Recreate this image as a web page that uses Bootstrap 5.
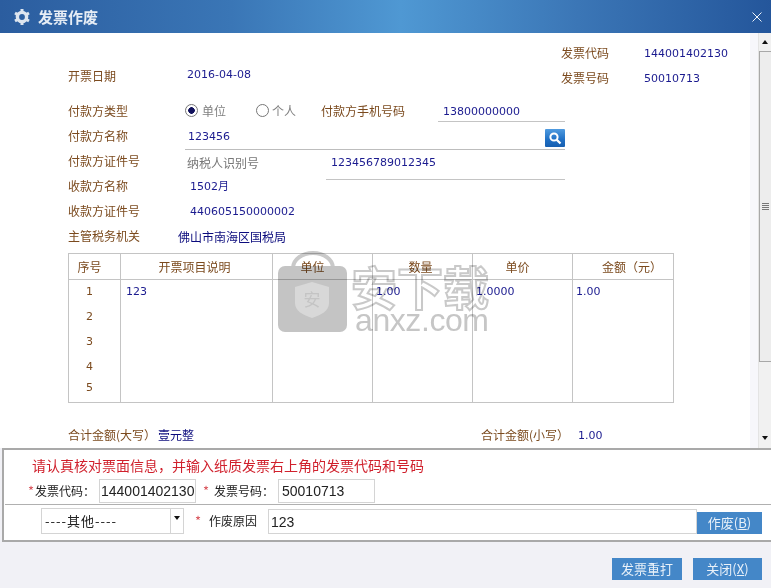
<!DOCTYPE html>
<html lang="zh-CN">

<head>
    <meta charset="UTF-8">
    <meta name="viewport" content="width=device-width, initial-scale=1.0">
    <title>发票作废</title>
    <link href="https://cdn.jsdelivr.net/npm/bootstrap@5.3.2/dist/css/bootstrap.min.css" rel="stylesheet">
    <style>
        html, body {
            height: 100%;
            overflow: hidden;
        }

        body {
            background-color: #f1f1f6;
            font-family: "Noto Sans CJK SC", "Liberation Sans", sans-serif;
            font-size: 12px;
            line-height: 16px;
        }

        .dlg {
            width: 771px;
            height: 588px;
        }

        .title-bar {
            height: 33px;
            padding: 0 8px 0 14px;
            background: linear-gradient(90deg, #2b5d9f 0%, #3a76b6 30%, #4f98d3 52%, #3b76b6 75%, #24569b 100%);
            color: #e6edf5;
            font-size: 15px;
            font-weight: 700;
        }

        .dlg-main {
            height: 415px;
            background: #fff;
        }

        .form-area {
            width: 758px;
            padding-left: 68px;
            background: linear-gradient(90deg, #fff 99%, #f7f7fb 99%);
        }

        .lbl {
            color: #7b4a1e;
        }

        .val {
            color: #1b1b8f;
            font-family: "DejaVu Sans", "Noto Sans CJK SC", sans-serif;
            font-size: 11px;
        }

        .val-dark {
            color: #0b0b7d;
            font-family: "Noto Sans CJK SC", sans-serif;
            font-size: 12px;
        }

        .val-low {
            padding-top: 2px;
        }

        .top-block {
            padding-top: 7px;
            height: 65px;
        }

        .top-left {
            padding-top: 28px;
        }

        .date-val {
            margin: -1px 0 0 2px;
        }

        .top-right {
            width: 197px;
        }

        .fld-row {
            height: 25px;
        }

        .w-lbl {
            width: 117px;
            flex: none;
        }

        .w-lbl-r {
            width: 83px;
            flex: none;
        }

        .radio-txt {
            color: #808080;
        }

        .radio-a {
            width: 54px;
        }

        .radio-b {
            width: 52px;
            padding-left: 3px;
        }

        .phone-lbl {
            width: 84px;
        }

        .form-check-input.radio-mini {
            width: 13px;
            height: 13px;
            margin: 0;
            border-color: #777;
            flex: none;
        }

        .form-check-input.radio-mini:checked {
            background-color: #fff;
            background-image: radial-gradient(circle, #12125c 3px, transparent 3.6px);
            border-color: #777;
        }

        .phone-fld {
            width: 127px;
            height: 24px;
            margin-left: 33px;
            padding: 6px 0 0 5px;
            border-bottom: 1px solid #c4c4c4;
        }

        .name-fld {
            width: 380px;
            height: 27px;
            padding-left: 3px;
            border-bottom: 1px solid #bdbdbd;
        }

        .name-val {
            margin-top: 6px;
        }

        .search-btn {
            width: 20px;
            height: 18px;
            margin-top: 6px;
            background: linear-gradient(180deg, #4f9be0 0%, #1f6fc4 60%, #175fb0 100%);
            border-radius: 1px;
        }

        .id-type {
            width: 141px;
            flex: none;
            padding: 7px 0 0 2px;
            color: #777;
        }

        .id-fld {
            width: 239px;
            height: 32px;
            flex: none;
            padding: 7px 0 0 5px;
            border-bottom: 1px solid #c4c4c4;
        }

        .val-shift {
            padding: 3px 0 0 5px;
        }

        .office-val {
            margin: 2px 0 0 -7px;
        }

        .inv-tbl {
            width: 605px;
            margin: 5px 0 0;
            table-layout: fixed;
            border-collapse: collapse;
            border: 1px solid #c4c4c4;
        }

        .inv-tbl th, .inv-tbl td {
            padding: 0;
            border: 0;
            border-left: 1px solid #c4c4c4;
            background: transparent;
            box-shadow: none;
            font-weight: 400;
            vertical-align: middle;
        }

        .inv-tbl thead th {
            height: 26px;
            text-align: center;
            color: #7b4a1e;
            border-bottom: 1px solid #c4c4c4;
        }

        .inv-tbl tbody td {
            height: 25px;
        }

        .inv-tbl td.num-cell {
            text-align: center;
            padding-right: 10px;
            color: #7b4a1e;
            font-family: "DejaVu Sans", sans-serif;
            font-size: 11px;
        }

        .inv-tbl td.txt-cell {
            padding-left: 3px;
            color: #1b1b8f;
            font-family: "DejaVu Sans", sans-serif;
            font-size: 11px;
        }

        .inv-tbl td.txt-first {
            padding-left: 5px;
        }

        .inv-tbl tr.last-row td {
            height: 23px;
            vertical-align: top;
        }

        .col-a { width: 52px; }
        .col-b { width: 152px; }
        .col-c { width: 100px; }
        .col-d { width: 101px; }

        .inv-tbl th.pr-10 { padding-right: 10px; }
        .inv-tbl th.pr-4 { padding-right: 4px; }
        .inv-tbl th.pr-20 { padding-right: 20px; }
        .inv-tbl th.pl-18 { padding-left: 18px; }

        .sum-row {
            height: 22px;
            margin-top: 21px;
        }

        .sum-big {
            width: 90px;
            flex: none;
        }

        .sum-mid {
            width: 323px;
            flex: none;
        }

        .sum-small {
            width: 97px;
            flex: none;
        }

        .watermark {
            position: absolute;
            left: 277px;
            top: 217px;
            mix-blend-mode: multiply;
            pointer-events: none;
        }

        .wm-cn {
            font-family: "Noto Sans CJK SC", sans-serif;
            font-size: 46px;
            font-weight: 700;
            fill: #fff;
            stroke: #c9c9c9;
            stroke-width: 2px;
        }

        .wm-en {
            font-family: "Liberation Sans", sans-serif;
            font-size: 32px;
            fill: #c6c6c6;
        }

        .wm-badge {
            font-family: "Noto Sans CJK SC", sans-serif;
            font-size: 17px;
            fill: #c4c4c4;
        }

        .scroll-col {
            width: 13px;
            background: #f1f1f1;
            border-left: 1px solid #e4e4e4;
        }

        .scroll-arrow {
            height: 18px;
        }

        .scroll-thumb {
            height: 311px;
            background: #ededed;
            border: 1px solid #a8a8a8;
            border-right: 0;
        }

        .grip {
            width: 7px;
            height: 7px;
            background: repeating-linear-gradient(180deg, #777 0 1px, transparent 1px 2px);
        }

        .tri-up {
            transform: rotate(180deg);
        }

        .check-panel {
            height: 94px;
            margin-left: 2px;
            background: #fff;
            border: 2px solid #a9a9a9;
            border-right: 0;
        }

        .check-top {
            height: 55px;
            border-bottom: 1px solid #b0b0b0;
            margin-left: 1px;
        }

        .warn-msg {
            height: 30px;
            padding: 7px 0 0 27px;
            color: #d0202c;
            font-size: 14px;
            line-height: 16px;
        }

        .req {
            color: #d9535a;
            font-size: 13px;
            flex: none;
        }

        .req-a {
            width: 7px;
        }

        .req-b {
            width: 11px;
            margin-left: 7px;
        }

        .code-lbl {
            color: #222;
            font-size: 12px;
            white-space: nowrap;
            flex: none;
        }

        .code-w {
            width: 64px;
        }

        .code-row {
            margin-top: -1px;
            padding-left: 23px;
        }

        .code-box {
            width: 97px;
            height: 24px;
            padding: 0 0 0 1px;
            border: 1px solid #d4d4d4;
            border-radius: 0;
            color: #222;
            font-family: "Liberation Sans", sans-serif;
            font-size: 14px;
            flex: none;
        }

        .code-box.box-second {
            padding-left: 3px;
        }

        .reason-row {
            padding: 3px 9px 0 37px;
        }

        .sel-box {
            width: 143px;
            height: 26px;
            flex: none;
            border: 1px solid #d4d4d4;
        }

        .sel-plain {
            width: 129px;
            height: 24px;
            padding: 0 0 0 3px;
            border: 0;
            border-radius: 0;
            background: #fff;
            color: #222;
            font-size: 13px;
            letter-spacing: 1px;
            appearance: none;
            outline: 0;
        }

        .sel-arrow {
            width: 13px;
            border-left: 1px solid #d4d4d4;
            padding-top: 7px;
        }

        .tri {
            width: 0;
            height: 0;
            border-left: 3px solid transparent;
            border-right: 3px solid transparent;
            border-top: 4px solid #111;
        }

        .reason-lbl {
            width: 84px;
            flex: none;
            padding-left: 11px;
        }

        .reason-in {
            width: 429px;
            height: 25px;
            margin-top: 1px;
            flex: none;
            padding: 0 0 0 2px;
            border: 1px solid #d4d4d4;
            border-radius: 0;
            color: #222;
            font-family: "Liberation Sans", sans-serif;
            font-size: 14px;
        }

        .btn.btn-blue {
            height: 22px;
            padding: 0;
            border: 0;
            border-radius: 0;
            background-color: #4487c8;
            color: #e9f1f9;
            font-size: 13px;
            line-height: 22px;
        }

        .btn.btn-void {
            width: 65px;
            margin-top: 4px;
        }

        .dlg-foot {
            padding: 16px 9px 0 0;
            gap: 11px;
        }

        .btn.btn-reprint {
            width: 70px;
        }

        .btn.btn-quit {
            width: 69px;
        }
    </style>
</head>

<body>
    <div class="dlg d-flex flex-column">
        <!-- title -->
        <div class="title-bar d-flex align-items-center">
            <svg width="16" height="16" viewBox="0 0 16 16" class="me-2 flex-shrink-0">
                <circle cx="8" cy="8" r="4.600" fill="none" stroke="#dde5ef" stroke-width="3.400"/>
                <path d="M8 0v3M8 13v3M1 4l2.600 1.500M12.400 10.500L15 12M1 12l2.600-1.500M12.400 5.500L15 4" stroke="#dde5ef" stroke-width="3"/>
            </svg>
            <span>发票作废</span>
            <svg width="12" height="12" viewBox="0 0 12 12" class="ms-auto">
                <path d="M1.500 1.500l9 9M10.500 1.500l-9 9" stroke="#eef3f9" stroke-width="1" fill="none"/>
            </svg>
        </div>

        <!-- invoice -->
        <div class="dlg-main d-flex position-relative">
            <div class="form-area">
                <div class="top-block d-flex justify-content-between">
                    <div class="top-left d-flex align-items-start">
                        <span class="lbl w-lbl">开票日期</span>
                        <span class="val date-val">2016-04-08</span>
                    </div>
                    <div class="top-right">
                        <div class="fld-row d-flex align-items-center">
                            <span class="lbl w-lbl-r">发票代码</span>
                            <span class="val val-low">144001402130</span>
                        </div>
                        <div class="fld-row d-flex align-items-center">
                            <span class="lbl w-lbl-r">发票号码</span>
                            <span class="val val-low">50010713</span>
                        </div>
                    </div>
                </div>

                <div class="fld-row d-flex align-items-center">
                    <span class="lbl w-lbl">付款方类型</span>
                    <input class="form-check-input radio-mini" type="radio" name="payer" checked>
                    <span class="radio-txt radio-a ms-1">单位</span>
                    <input class="form-check-input radio-mini" type="radio" name="payer">
                    <span class="radio-txt radio-b">个人</span>
                    <span class="lbl phone-lbl">付款方手机号码</span>
                    <div class="phone-fld val align-self-start">13800000000</div>
                </div>
                <div class="fld-row d-flex">
                    <span class="lbl w-lbl d-flex align-items-center">付款方名称</span>
                    <div class="name-fld d-flex justify-content-between">
                        <span class="val name-val">123456</span>
                        <div class="search-btn d-flex align-items-center justify-content-center">
                            <svg width="14" height="14" viewBox="0 0 14 14">
                                <circle cx="6" cy="6" r="3.600" fill="none" stroke="#fff" stroke-width="2"/>
                                <path d="M8.600 8.600L12.500 12.500" stroke="#fff" stroke-width="2.200"/>
                            </svg>
                        </div>
                    </div>
                </div>
                <div class="fld-row d-flex">
                    <span class="lbl w-lbl d-flex align-items-center">付款方证件号</span>
                    <span class="id-type">纳税人识别号</span>
                    <div class="id-fld val">123456789012345</div>
                </div>
                <div class="fld-row d-flex align-items-center">
                    <span class="lbl w-lbl">收款方名称</span>
                    <span class="val val-shift">1502月</span>
                </div>
                <div class="fld-row d-flex align-items-center">
                    <span class="lbl w-lbl">收款方证件号</span>
                    <span class="val val-shift">440605150000002</span>
                </div>
                <div class="fld-row d-flex align-items-center">
                    <span class="lbl w-lbl">主管税务机关</span>
                    <span class="val-dark office-val">佛山市南海区国税局</span>
                </div>

                <table class="table inv-tbl">
                    <colgroup>
                        <col class="col-a">
                        <col class="col-b">
                        <col class="col-c">
                        <col class="col-c">
                        <col class="col-c">
                        <col class="col-d">
                    </colgroup>
                    <thead>
                        <tr>
                            <th class="pr-10">序号</th>
                            <th class="pr-4">开票项目说明</th>
                            <th class="pr-20">单位</th>
                            <th class="pr-4">数量</th>
                            <th class="pr-10">单价</th>
                            <th class="pl-18">金额（元）</th>
                        </tr>
                    </thead>
                    <tbody>
                        <tr>
                            <td class="num-cell">1</td>
                            <td class="txt-cell txt-first">123</td>
                            <td></td>
                            <td class="txt-cell">1.00</td>
                            <td class="txt-cell">1.0000</td>
                            <td class="txt-cell">1.00</td>
                        </tr>
                        <tr><td class="num-cell">2</td><td></td><td></td><td></td><td></td><td></td></tr>
                        <tr><td class="num-cell">3</td><td></td><td></td><td></td><td></td><td></td></tr>
                        <tr><td class="num-cell">4</td><td></td><td></td><td></td><td></td><td></td></tr>
                        <tr class="last-row"><td class="num-cell">5</td><td></td><td></td><td></td><td></td><td></td></tr>
                    </tbody>
                </table>

                <div class="sum-row d-flex align-items-center">
                    <span class="lbl sum-big">合计金额(大写）</span>
                    <span class="val-dark sum-mid">壹元整</span>
                    <span class="lbl sum-small">合计金额(小写）</span>
                    <span class="val val-low">1.00</span>
                </div>
            </div>

            <!-- watermark lies over the invoice -->
            <svg class="watermark" width="220" height="90" viewBox="0 0 220 90">
                <path d="M16 18a20 15 0 0 1 40 0" fill="none" stroke="#c9c9c9" stroke-width="4"/>
                <rect x="1" y="16" width="69" height="66" rx="7" fill="#c4c4c4"/>
                <path d="M35 32l17 5v16c0 8-8 12-17 15-9-3-17-7-17-15V37z" fill="#d8d8d8"/>
                <text class="wm-badge" x="35" y="56" text-anchor="middle">安</text>
                <text class="wm-cn" x="74" y="55" textLength="138">安下载</text>
                <text class="wm-en" x="78" y="81" textLength="134">anxz.com</text>
            </svg>

            <!-- scrollbar -->
            <div class="scroll-col d-flex flex-column">
                <div class="scroll-arrow d-flex align-items-center justify-content-center">
                    <div class="tri tri-up"></div>
                </div>
                <div class="scroll-thumb d-flex align-items-center justify-content-center">
                    <div class="grip"></div>
                </div>
                <div class="flex-grow-1 d-flex align-items-end justify-content-center pb-1">
                    <div class="tri mb-1"></div>
                </div>
            </div>
        </div>

        <!-- check panel -->
        <div class="check-panel">
            <div class="check-top">
                <div class="warn-msg">请认真核对票面信息，并输入纸质发票右上角的发票代码和号码</div>
                <div class="code-row d-flex align-items-center">
                    <span class="req req-a">*</span>
                    <span class="code-lbl code-w">发票代码：</span>
                    <input class="form-control code-box" type="text" value="144001402130">
                    <span class="req req-b">*</span>
                    <span class="code-lbl code-w">发票号码：</span>
                    <input class="form-control code-box box-second" type="text" value="50010713">
                </div>
            </div>
            <div class="reason-row d-flex">
                <div class="sel-box d-flex">
                    <select class="sel-plain">
                        <option>----其他----</option>
                    </select>
                    <div class="sel-arrow d-flex justify-content-center"><div class="tri"></div></div>
                </div>
                <div class="reason-lbl d-flex align-items-center">
                    <span class="req me-2">*</span>
                    <span class="code-lbl">作废原因</span>
                </div>
                <input class="form-control reason-in" type="text" value="123">
                <button class="btn btn-blue btn-void" type="button">作废(<u>B</u>)</button>
            </div>
        </div>

        <!-- footer -->
        <div class="dlg-foot d-flex justify-content-end">
            <button class="btn btn-blue btn-reprint" type="button">发票重打</button>
            <button class="btn btn-blue btn-quit" type="button">关闭(<u>X</u>)</button>
        </div>
    </div>

    <script src="https://cdn.jsdelivr.net/npm/bootstrap@5.3.2/dist/js/bootstrap.bundle.min.js"></script>
</body>

</html>
